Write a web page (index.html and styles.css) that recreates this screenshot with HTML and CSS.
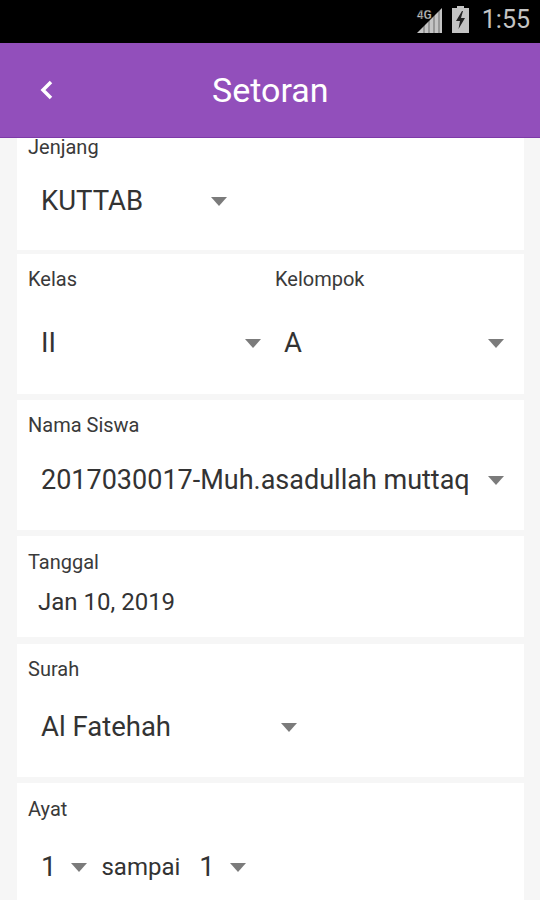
FILE: index.html
```html
<!DOCTYPE html>
<html lang="id">
<head>
    <meta charset="UTF-8">
    <meta name="viewport" content="width=device-width, initial-scale=1.0">
    <title>Setoran</title>
    <link rel="stylesheet" href="styles.css">
</head>
<body>
    <div class="phone">
        <div class="status-bar">
            <span class="net-label">4G</span>
            <svg class="signal" width="28" height="26" viewBox="0 0 28 26">
                <path d="M27 1V26H2Z" fill="#c4c4c4"/>
                <path d="M9 26V18M14 26V13M19 26V8M24 26V3" stroke="#000" stroke-width="1" opacity="0.45"/>
            </svg>
            <svg class="battery" width="19" height="27" viewBox="0 0 19 27">
                <path d="M6 0H13V2H18V27H1V2H6Z" fill="#c4c4c4"/>
                <path d="M11 5L5 15H9L7.500 23L14 12H10L12 5Z" fill="#222"/>
            </svg>
            <span class="clock">1:55</span>
        </div>

        <header class="app-bar">
            <svg class="back" width="16" height="22" viewBox="0 0 16 22">
                <path d="M12 3L4 11L12 19" fill="none" stroke="#fff" stroke-width="3.500"/>
            </svg>
            <h1>Setoran</h1>
        </header>

        <main class="content">
            <section class="card card-jenjang">
                <div class="label">Jenjang</div>
                <div class="select select-jenjang">
                    <span class="value">KUTTAB</span>
                    <span class="caret"></span>
                </div>
            </section>

            <section class="card card-kelas">
                <div class="col">
                    <div class="label">Kelas</div>
                    <div class="select select-kelas">
                        <span class="value">II</span>
                        <span class="caret"></span>
                    </div>
                </div>
                <div class="col">
                    <div class="label">Kelompok</div>
                    <div class="select select-kelompok">
                        <span class="value">A</span>
                        <span class="caret"></span>
                    </div>
                </div>
            </section>

            <section class="card card-siswa">
                <div class="label">Nama Siswa</div>
                <div class="select select-siswa">
                    <span class="value value-clip">2017030017-Muh.asadullah muttaqin</span>
                    <span class="caret"></span>
                </div>
            </section>

            <section class="card card-tanggal">
                <div class="label">Tanggal</div>
                <div class="date">Jan 10, 2019</div>
            </section>

            <section class="card card-surah">
                <div class="label">Surah</div>
                <div class="select select-surah">
                    <span class="value">Al Fatehah</span>
                    <span class="caret"></span>
                </div>
            </section>

            <section class="card card-ayat">
                <div class="label">Ayat</div>
                <div class="ayat-row">
                    <span class="value">1</span>
                    <span class="caret"></span>
                    <span class="value sampai">sampai</span>
                    <span class="value">1</span>
                    <span class="caret"></span>
                </div>
            </section>
        </main>
    </div>
</body>
</html>
```

FILE: styles.css
```css
* {
    margin: 0;
    padding: 0;
    box-sizing: border-box;
}

body {
    font-family: Roboto, 'Liberation Sans', sans-serif;
    background: #f6f6f6;
}

.phone {
    width: 540px;
    height: 900px;
    overflow: hidden;
    display: flex;
    flex-direction: column;
}

.status-bar {
    height: 43px;
    flex-shrink: 0;
    background: #000;
    color: #c4c4c4;
    display: flex;
    align-items: center;
    justify-content: flex-end;
    padding: 0 10px 4px 0;
}

.net-label {
    font-size: 12px;
    font-weight: 700;
    margin: 0 -17px 10px 0;
    position: relative;
    z-index: 1;
    -webkit-text-stroke: 0.3px #000;
}

.signal {
    margin-right: 8px;
}

.battery {
    margin-right: 12px;
}

.clock {
    font-size: 25px;
}

.app-bar {
    height: 95px;
    flex-shrink: 0;
    background: #924fbb;
    color: #fff;
    border-bottom: 1px solid #7d3aa8;
    display: flex;
    align-items: center;
    padding: 0 0 0 39px;
}

.app-bar h1 {
    font-size: 34px;
    font-weight: 400;
    margin-left: 157px;
}

.back {
    flex-shrink: 0;
}

.content {
    flex: 1;
    overflow: hidden;
    padding: 0 16px 0 17px;
    display: flex;
    flex-direction: column;
    gap: 6px;
}

.card {
    background: #fff;
    padding: 0 11px;
    flex-shrink: 0;
}

.label {
    font-size: 20px;
    color: #3a3a3a;
    line-height: 22px;
}

.value {
    font-size: 27.500px;
    color: #333;
    line-height: 30px;
    white-space: nowrap;
}

.caret {
    display: block;
    width: 0;
    height: 0;
    border-left: 8px solid transparent;
    border-right: 8px solid transparent;
    border-top: 9px solid #7b7b7b;
    flex-shrink: 0;
}

.select {
    display: flex;
    align-items: center;
    justify-content: space-between;
    padding-left: 13px;
}

.card-jenjang {
    height: 112px;
}

.card-jenjang .label {
    line-height: 18px;
}

.select-jenjang {
    width: 199px;
    margin-top: 30px;
}

.card-kelas {
    height: 140px;
    margin-top: -2px;
    padding-top: 14px;
    display: flex;
}

.col {
    width: 247px;
    flex-shrink: 0;
}

.select-kelas {
    width: 233px;
    margin-top: 38px;
}

.select-kelompok {
    width: 229px;
    margin-top: 38px;
    padding-left: 9px;
}

.card-siswa {
    height: 130px;
    padding-top: 14px;
}

.select-siswa {
    width: 476px;
    margin-top: 29px;
}

.value-clip {
    width: 427px;
    overflow: hidden;
    font-size: 27px;
}

.card-tanggal {
    height: 101px;
    padding-top: 15px;
}

.date {
    font-size: 24px;
    color: #333;
    line-height: 30px;
    margin-top: 14px;
    padding-left: 10px;
}

.card-surah {
    height: 133px;
    margin-top: 1px;
    padding-top: 14px;
}

.select-surah {
    width: 269px;
    margin-top: 32px;
}

.card-ayat {
    height: 130px;
    padding-top: 15px;
}

.ayat-row {
    display: flex;
    align-items: center;
    margin-top: 32px;
    padding-left: 13px;
}

.ayat-row .caret {
    margin-left: 15px;
}

.sampai {
    font-size: 24px;
    margin: 0 19px 0 14px;
}
```
